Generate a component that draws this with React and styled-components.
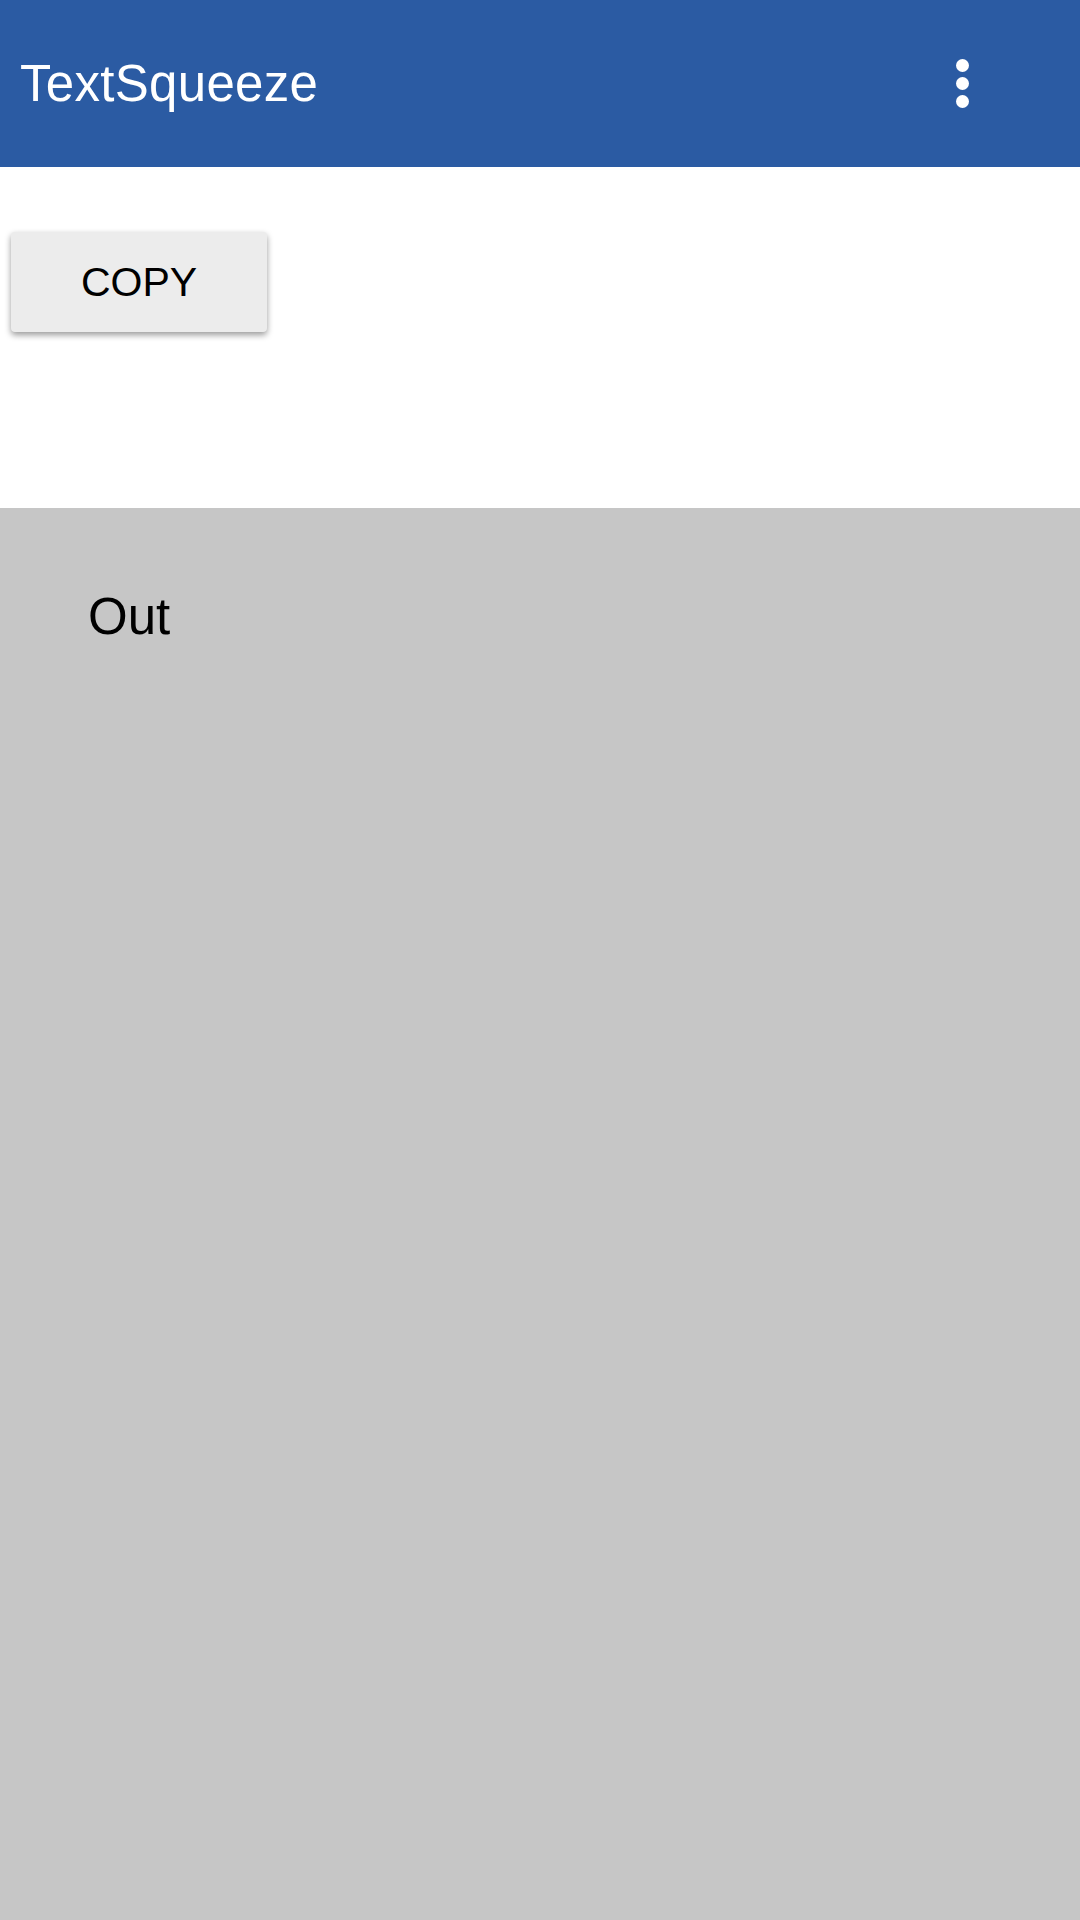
import React from 'react';
import styled, { createGlobalStyle } from 'styled-components';

const GlobalStyle = createGlobalStyle`
  html, body {
    margin: 0;
    padding: 0;
    height: 100%;
  }
  body {
    font-family: "Liberation Sans", Arial, sans-serif;
  }
  #root {
    height: 100%;
  }
`;

const Page = styled.div`
  display: flex;
  flex-direction: column;
  height: 1920px;
  width: 1080px;
`;

const AppBar = styled.header`
  background-color: #2b5ba3;
  height: 167px;
  display: flex;
  align-items: center;
  justify-content: space-between;
  padding: 0 111px 0 20px;
  flex-shrink: 0;
`;

const Title = styled.h1`
  margin: 0;
  color: white;
  font-size: 51px;
  letter-spacing: 0.3px;
  font-weight: normal;
  line-height: 1;
`;

const MenuButton = styled.div`
  display: flex;
  flex-direction: column;
  gap: 5px;
  cursor: pointer;
`;

const Dot = styled.span`
  width: 13px;
  height: 13px;
  border-radius: 50%;
  background: white;
`;

const Controls = styled.section`
  background: white;
  height: 341px;
  padding: 65px 0 0 11px;
  box-sizing: border-box;
  flex-shrink: 0;
`;

const CopyButton = styled.button`
  width: 256px;
  height: 100px;
  background-color: #ececec;
  border: none;
  border-radius: 4px;
  box-shadow: 0 3px 6px rgba(0, 0, 0, 0.4);
  font-family: "Liberation Sans", Arial, sans-serif;
  font-size: 41px;
  color: black;
  display: flex;
  align-items: center;
  justify-content: center;
  padding: 0;
  cursor: pointer;
`;

const Output = styled.section`
  flex: 1;
  background-color: #c6c6c6;
  padding: 83px 0 0 88px;
`;

const OutText = styled.p`
  margin: 0;
  font-size: 51px;
  line-height: 1;
  color: black;
`;

const App = () => {
  return (
    <>
      <GlobalStyle />
      <Page>
        <AppBar>
          <Title>TextSqueeze</Title>
          <MenuButton>
            <Dot />
            <Dot />
            <Dot />
          </MenuButton>
        </AppBar>
        <Controls>
          <CopyButton>COPY</CopyButton>
        </Controls>
        <Output>
          <OutText>Out</OutText>
        </Output>
      </Page>
    </>
  );
};

export default App;
